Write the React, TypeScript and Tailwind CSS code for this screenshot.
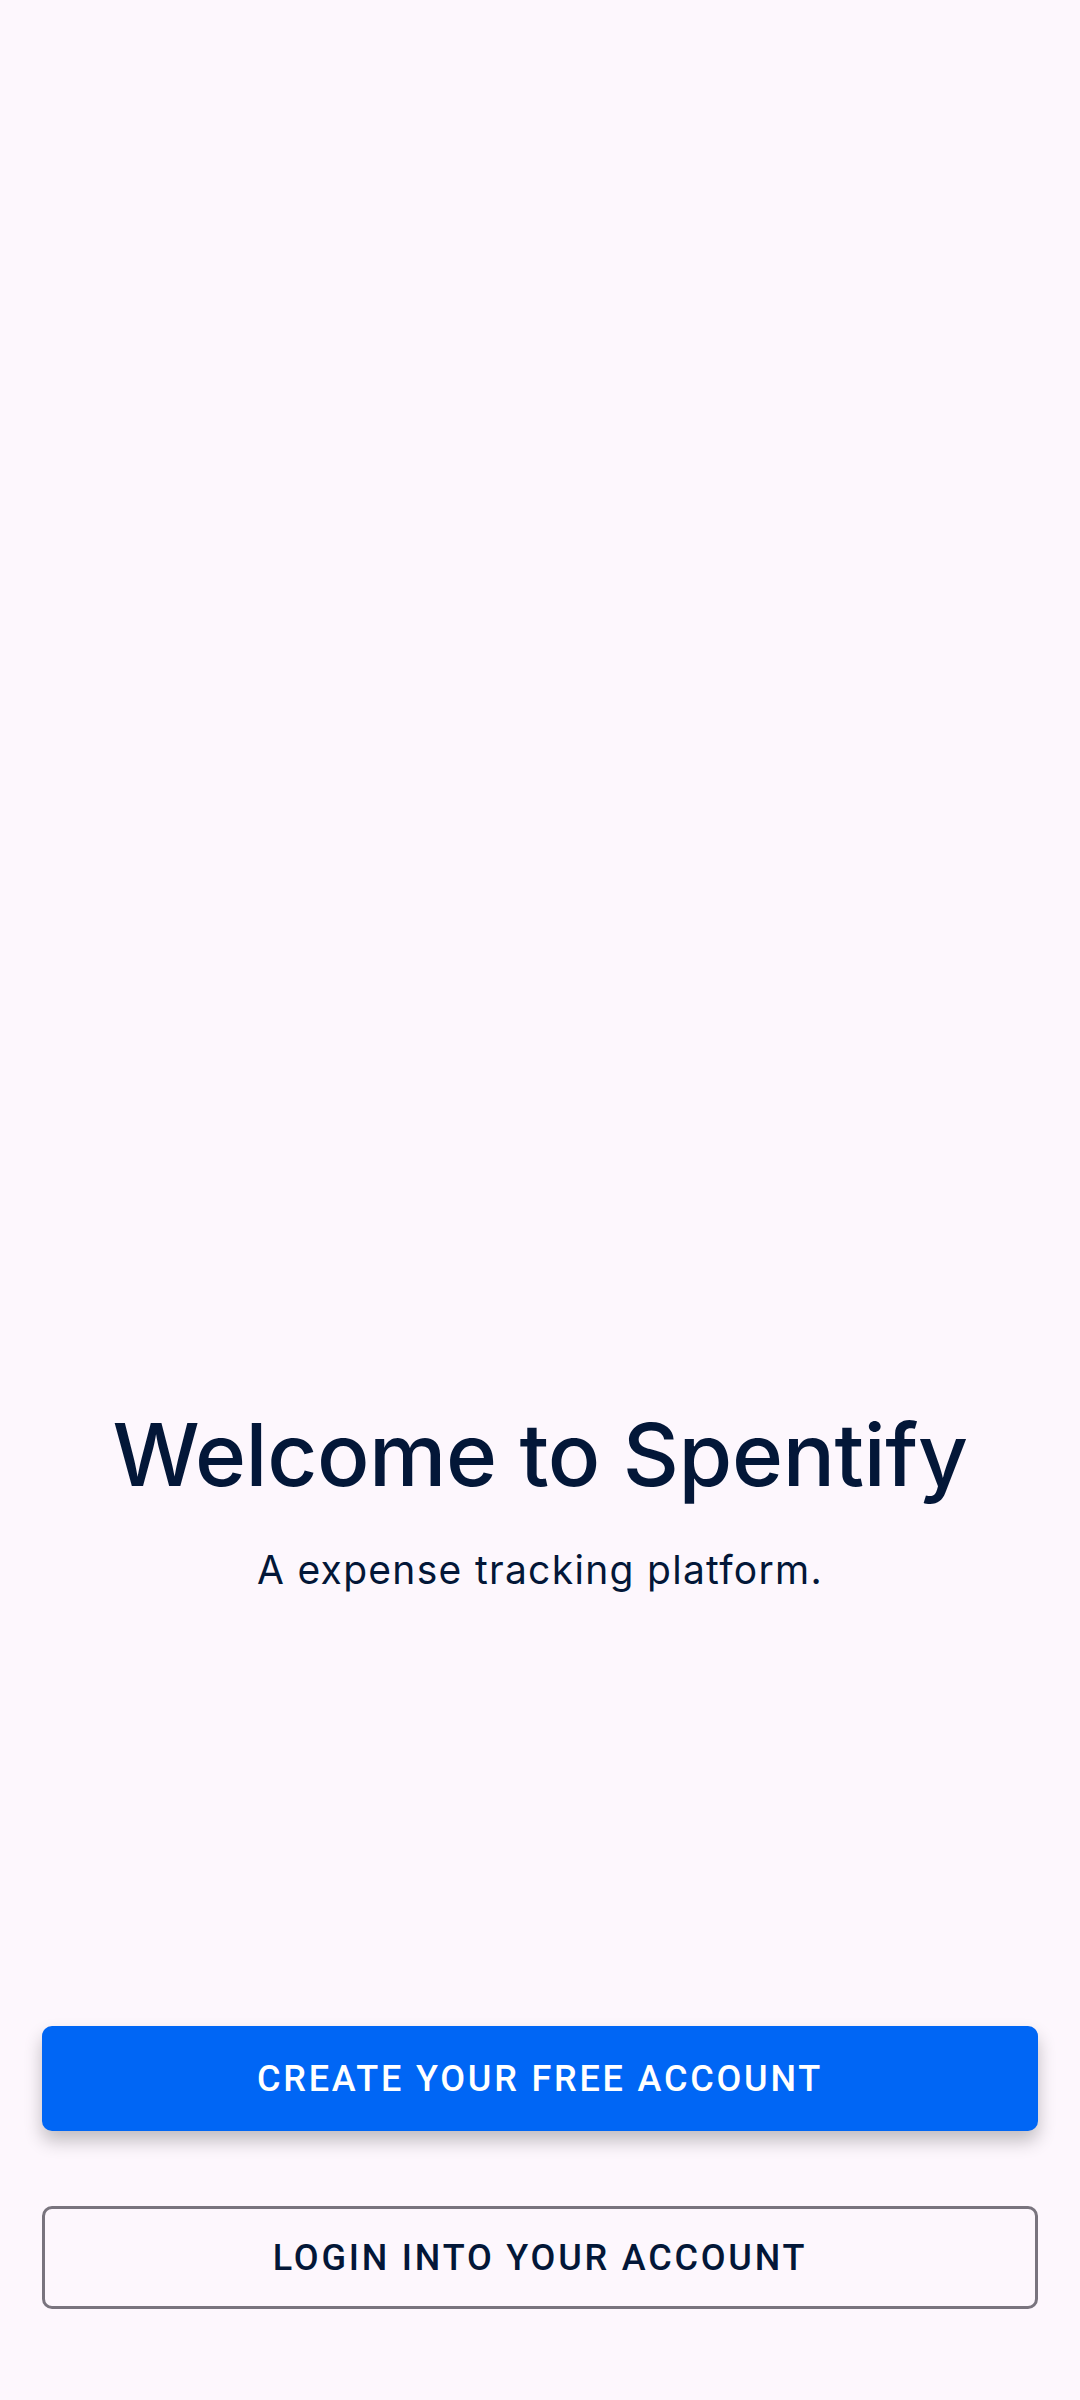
import React from "react";

export default function App() {
  return (
    <div className="flex h-[2400px] w-full flex-col bg-[#fdf7fd]" style={{ fontFamily: "Inter, 'Liberation Sans', sans-serif" }}>
      <div className="flex flex-1 flex-col items-center justify-end pb-[432px] text-[#031738]">
        <h1 className="text-[87px] font-medium leading-[100px] tracking-[-0.4px]">Welcome to Spentify</h1>
        <p className="mt-[41px] text-[39px] leading-[48px] tracking-[1.3px]">A expense tracking platform.</p>
      </div>
      <div
        className="flex flex-col gap-[75px] px-[42px] pb-[91px]"
        style={{ fontFamily: "Roboto, 'Liberation Sans', sans-serif" }}
      >
        <button className="h-[105px] w-full rounded-[10px] bg-[#0066f5] text-[36px] font-medium tracking-[2.8px] text-white shadow-[0_10px_18px_rgba(0,0,0,0.24)]">
          CREATE YOUR FREE ACCOUNT
        </button>
        <button className="h-[103px] w-full rounded-[10px] border-[3px] border-[#79747e] text-[36px] font-medium tracking-[2.8px] text-[#031738]">
          LOGIN INTO YOUR ACCOUNT
        </button>
      </div>
    </div>
  );
}
